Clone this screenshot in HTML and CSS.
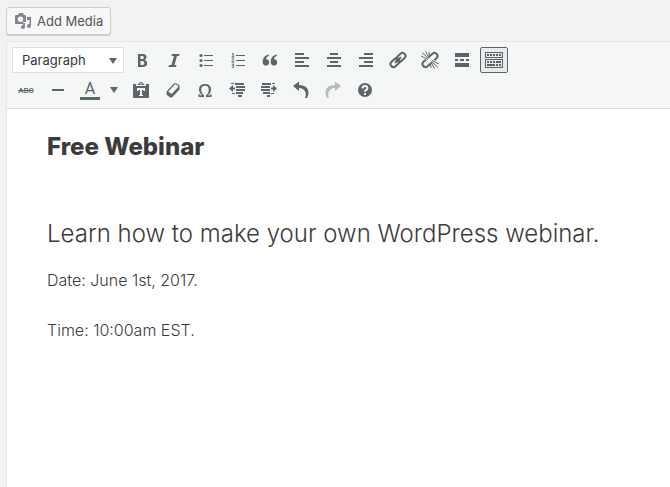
FILE: index.html
```html
<!DOCTYPE html>
<html lang="en">
<head>
  <meta charset="UTF-8">
  <meta name="viewport" content="width=device-width, initial-scale=1.0">
  <title>Edit Post</title>
  <link rel="stylesheet" href="styles.css">
</head>
<body>
  <div class="media-buttons">
    <button type="button" class="add-media">
      <svg width="18" height="18" viewBox="0 0 18 18" aria-hidden="true">
        <path fill-rule="evenodd" d="M2 3h2l1-2h4l1 2h1q1 0 1 1v6H9v2H2q-1 0-1-1V4q0-1 1-1zM6.5 4.500a2.700 2.700 0 1 0 0 5.400 2.700 2.700 0 0 0 0-5.400z"/>
        <path d="M13 5h4v9a2 2 0 1 1-2-2h.5V8H13zM9 11h2v4a2 2 0 1 1-2-2z"/>
      </svg>
      Add Media
    </button>
  </div>

  <div class="editor">
    <div class="toolbar" role="toolbar" aria-label="Formatting">
      <div class="row">
        <div class="format">
          <select aria-label="Format">
            <option>Paragraph</option>
            <option>Heading 1</option>
            <option>Heading 2</option>
            <option>Preformatted</option>
          </select>
          <svg class="caret" width="8" height="6" viewBox="0 0 8 6" aria-hidden="true"><path d="M0 0h8L4 6z"/></svg>
        </div>
        <button type="button" class="tool" aria-label="Bold">
          <svg viewBox="0 0 20 20"><path fill-rule="evenodd" d="M6 4h4.500q4 0 4 3.300 0 2-2 2.600 2.700.5 2.700 3.100 0 4-4.700 4H6zM8.500 6v3H10q2 0 2-1.500T10 6zM8.500 11v4h1.700q2.200 0 2.200-2t-2.200-2z"/></svg>
        </button>
        <button type="button" class="tool" aria-label="Italic">
          <svg viewBox="0 0 20 20"><path d="M8 4h7.500L15 6h-2l-2.500 9h2l-.5 2H4.500l.5-2h2.500L10 6H7.500z"/></svg>
        </button>
        <button type="button" class="tool" aria-label="Bulleted list">
          <svg viewBox="0 0 20 20"><circle cx="5" cy="5.500" r="1.600"/><circle cx="5" cy="10.500" r="1.600"/><circle cx="5" cy="15.500" r="1.600"/><path d="M8 5h9v1H8zM8 10h9v1H8zM8 15h9v1H8z"/></svg>
        </button>
        <button type="button" class="tool" aria-label="Numbered list">
          <svg viewBox="0 0 20 20"><path d="M8 5h9v1H8zM8 10h9v1H8zM8 15h9v1H8z"/><path class="line thin" d="M4 4l1-.7V7M3.500 7h3M3.700 9q2-1 2 .4 0 .8-2 2.600H6.500M3.700 14.200h2.300l-1.300 1.400q1.500 0 1.300 1-.4 1.200-2.400.6"/></svg>
        </button>
        <button type="button" class="tool" aria-label="Blockquote">
          <svg viewBox="0 0 20 20"><path d="M9 4.500v1.300Q6 6.800 6 9.200a3.200 3.200 0 1 1-3.200 3.600Q2.200 5.500 9 4.500zM17 4.500v1.300q-3 1-3 3.400a3.200 3.200 0 1 1-3.200 3.600Q10.200 5.500 17 4.500z"/></svg>
        </button>
        <button type="button" class="tool" aria-label="Align left">
          <svg viewBox="0 0 20 20"><path d="M3 3h9v2H3zM3 7h14v2H3zM3 11h9v2H3zM3 15h14v2H3z"/></svg>
        </button>
        <button type="button" class="tool" aria-label="Align center">
          <svg viewBox="0 0 20 20"><path d="M6 3h8v2H6zM3 7h14v2H3zM6 11h8v2H6zM3 15h14v2H3z"/></svg>
        </button>
        <button type="button" class="tool" aria-label="Align right">
          <svg viewBox="0 0 20 20"><path d="M8 3h9v2H8zM3 7h14v2H3zM8 11h9v2H8zM3 15h14v2H3z"/></svg>
        </button>
        <button type="button" class="tool" aria-label="Insert link">
          <svg viewBox="0 0 20 20"><g class="line" transform="rotate(-42 10 10)"><rect x="1" y="7" width="10" height="6" rx="3"/><rect x="9" y="7" width="10" height="6" rx="3"/><path d="M6 10h8"/></g></svg>
        </button>
        <button type="button" class="tool" aria-label="Remove link">
          <svg viewBox="0 0 20 20"><g class="line" transform="rotate(-42 10 10)"><path d="M9 13H4a3 3 0 0 1 0-6h3M11 7h5a3 3 0 0 1 0 6h-3"/></g><path class="line thin" d="M8.500 8.500L2 2.500M9 8L5.500 1.500M8 9.500L1 6M9.500 7.500L9 2M11.500 11.500l6.500 6M11 12l3.500 6.500M12 10.500l7 3.500M10.500 12.500L11 18"/></svg>
        </button>
        <button type="button" class="tool" aria-label="Insert Read More tag">
          <svg viewBox="0 0 20 20"><path d="M3 3h14v4H3zM3 9h3v2H3zM8 9h4v2H8zM14 9h3v2h-3zM3 13h14v4H3z"/></svg>
        </button>
        <button type="button" class="tool active" aria-label="Toolbar toggle" aria-pressed="true">
          <svg viewBox="0 0 20 20"><path fill-rule="evenodd" d="M1 2h18v6H1zM2 3v4h16V3zM1 9h18v9H1zM2 10v7h16v-7z"/><path d="M3 4h2v2H3zM6 4h2v2H6zM9 4h2v2H9zM12 4h2v2h-2zM15 4h2v2h-2zM3 11h2v2H3zM6 11h2v2H6zM9 11h2v2H9zM12 11h5v2h-5zM3 14h8v2H3zM12 14h2v2h-2zM15 14h2v2h-2z"/></svg>
        </button>
      </div>

      <div class="row">
        <button type="button" class="tool strike" aria-label="Strikethrough"><s>ABC</s></button>
        <button type="button" class="tool" aria-label="Horizontal line">
          <svg viewBox="0 0 20 20"><path d="M4 9h12v2H4z"/></svg>
        </button>
        <div class="split">
          <button type="button" class="tool color" aria-label="Text color"><span>A</span></button>
          <button type="button" class="open" aria-label="Choose text color">
            <svg class="caret" width="8" height="6" viewBox="0 0 8 6"><path d="M0 0h8L4 6z"/></svg>
          </button>
        </div>
        <button type="button" class="tool" aria-label="Paste as text">
          <svg viewBox="0 0 20 20"><path fill-rule="evenodd" d="M3 4h2v2h10V4h2q1 0 1 1v12q0 1-1 1H3q-1 0-1-1V5q0-1 1-1zM6 8v3h1.500v-1H9v5H8v1h4v-1h-1v-5h1.500v1H14V8z"/><path fill-rule="evenodd" d="M6 5l1.500-1Q8 2 10 2t2.500 2L14 5zM10 3a1 .8 0 1 0 0 1.600A1 .8 0 0 0 10 3z"/></svg>
        </button>
        <button type="button" class="tool" aria-label="Clear formatting">
          <svg viewBox="0 0 20 20"><path fill-rule="evenodd" d="M4 11l7-7.500Q12 3 13.500 3.500L16 5q1 1 .5 3v1.500l-7 7.500q-1 .7-2.500.2L4.500 15.500Q3 14.500 3.500 12.500zM5.200 11.700l3.500 2.300 6.500-7q.4-1-.5-1.500l-2-1.200q-.5-.1-1 .3z"/></svg>
        </button>
        <button type="button" class="tool" aria-label="Special character">
          <svg viewBox="0 0 20 20"><path d="M3.500 17v-3h1l.3 1.200h2.400Q4 13 4 9.500 4 4 10 4t6 5.500q0 3.500-3.200 5.700h2.400l.3-1.200h1v3H11v-1.800q2.800-1.700 2.800-5.500 0-4-3.800-4T6.200 9.700q0 3.800 2.800 5.500V17z"/></svg>
        </button>
        <button type="button" class="tool" aria-label="Decrease indent">
          <svg viewBox="0 0 20 20"><path d="M8 3h9v2H8zM9 6h9v2H9zM9 9h9v2H9zM9 12h7v2H9zM11 15h4v2h-4zM2 8.500L6 5v2.500h2v2H6V12zM4 3h3v1H4zM5 13h3v1H5z"/></svg>
        </button>
        <button type="button" class="tool" aria-label="Increase indent">
          <svg viewBox="0 0 20 20"><path d="M3 3h9v2H3zM2 6h9v2H2zM2 9h9v2H2zM4 12h7v2H4zM8 15h3v2H8zM18 8.500L14 5v2.500h-2v2h2V12zM13 3h3v1h-3zM12 13h3v1h-3z"/></svg>
        </button>
        <button type="button" class="tool" aria-label="Undo">
          <svg viewBox="0 0 20 20"><path d="M2 6L8 1.500V5q8.500 0 9.500 7 .2 3-1.500 6h-2q1.500-3 .5-5.500Q13 8 8 8v3z"/></svg>
        </button>
        <button type="button" class="tool" aria-label="Redo" disabled>
          <svg viewBox="0 0 20 20"><path d="M18 6L12 1.500V5q-8.500 0-9.500 7-.2 3 1.500 6h2q-1.500-3-.5-5.500Q7 8 12 8v3z"/></svg>
        </button>
        <button type="button" class="tool" aria-label="Keyboard shortcuts">
          <svg viewBox="0 0 20 20"><circle cx="10" cy="10" r="7"/><path class="mark" d="M7.500 8.300Q7.700 6 10 6t2.400 2q0 1.300-1.300 2-1.100.6-1.100 1.800M10 13v2"/></svg>
        </button>
      </div>
    </div>

    <div class="content" contenteditable="true" role="textbox" aria-label="Post content" spellcheck="false">
      <h1>Free Webinar</h1>
      <h2>Learn how to make your own WordPress webinar.</h2>
      <p>Date: June 1st, 2017.</p>
      <p>Time: 10:00am EST.</p>
    </div>
  </div>
</body>
</html>
```
FILE: styles.css
```css
* {
  box-sizing: border-box;
}

body {
  display: flex;
  flex-direction: column;
  min-height: 100vh;
  margin: 0;
  padding: 7px 0 0 6px;
  background-color: #f2f2f2;
  color: #3b3b3b;
  font-family: Inter, sans-serif;
  font-size: 13px;
}

button, select {
  font: inherit;
  cursor: pointer;
}

svg {
  fill: #5c646c;
}

.media-buttons {
  margin-bottom: 6px;
}

.add-media {
  display: flex;
  align-items: center;
  gap: 5px;
  height: 28px;
  padding: 0 7px;
  border: 1px solid #ccc;
  border-radius: 3px;
  background-color: #f7f7f7;
  box-shadow: 0 1px 0 #ccc;
  color: #555;
}

.add-media svg {
  fill: #82878c;
}

.editor {
  display: flex;
  flex: 1;
  flex-direction: column;
  border: 1px solid #e5e5e5;
  border-width: 1px 0 0 1px;
}

.toolbar {
  display: flex;
  flex-direction: column;
  gap: 4px;
  padding: 5px;
  border-bottom: 1px solid #ddd;
  background-color: #f5f6f6;
}

.row {
  display: flex;
  gap: 4px;
}

.format {
  position: relative;
  width: 112px;
}

.format select {
  width: 100%;
  height: 26px;
  padding: 0 9px;
  border: 1px solid #ddd;
  border-radius: 0;
  background-color: #fff;
  color: #32373c;
  appearance: none;
}

.caret {
  display: block;
}

.format .caret {
  position: absolute;
  top: 11px;
  right: 7px;
  pointer-events: none;
}

.tool {
  display: flex;
  align-items: center;
  justify-content: center;
  width: 28px;
  height: 26px;
  padding: 0;
  border: 1px solid transparent;
  border-radius: 2px;
  background: none;
  color: #5c646c;
}

.tool svg {
  flex: none;
  width: 20px;
  height: 20px;
}

.tool:hover, .tool.active {
  border-color: #5c646c;
}

.tool.active {
  background-color: #ebebeb;
}

.tool:disabled {
  border-color: transparent;
  opacity: 0.4;
}

.line {
  fill: none;
  stroke: #5c646c;
  stroke-width: 2;
}

.thin {
  stroke-width: 1;
}

.mark {
  fill: none;
  stroke: #f5f6f6;
  stroke-width: 2;
}

.strike {
  font-family: Roboto, sans-serif;
  font-size: 8px;
  font-weight: 500;
}

.split {
  display: flex;
}

.color span {
  width: 20px;
  border-bottom: 3px solid #5c646c;
  font-family: Roboto, sans-serif;
  font-size: 16px;
  line-height: 17px;
}

.open {
  display: flex;
  align-items: center;
  justify-content: center;
  width: 19px;
  padding: 0;
  border: 0;
  background: none;
}

.content {
  flex: 1;
  padding: 22px 40px;
  background-color: #fff;
  font-size: 16px;
  font-weight: 300;
  line-height: 26px;
  outline: none;
}

.content h1, .content h2 {
  font-size: 24px;
  line-height: 32px;
}

.content h1 {
  margin: 0 0 55px;
  font-weight: 800;
}

.content h2 {
  margin: 0 0 17px;
  font-weight: 300;
}

.content p {
  margin: 0 0 24px;
}
```
